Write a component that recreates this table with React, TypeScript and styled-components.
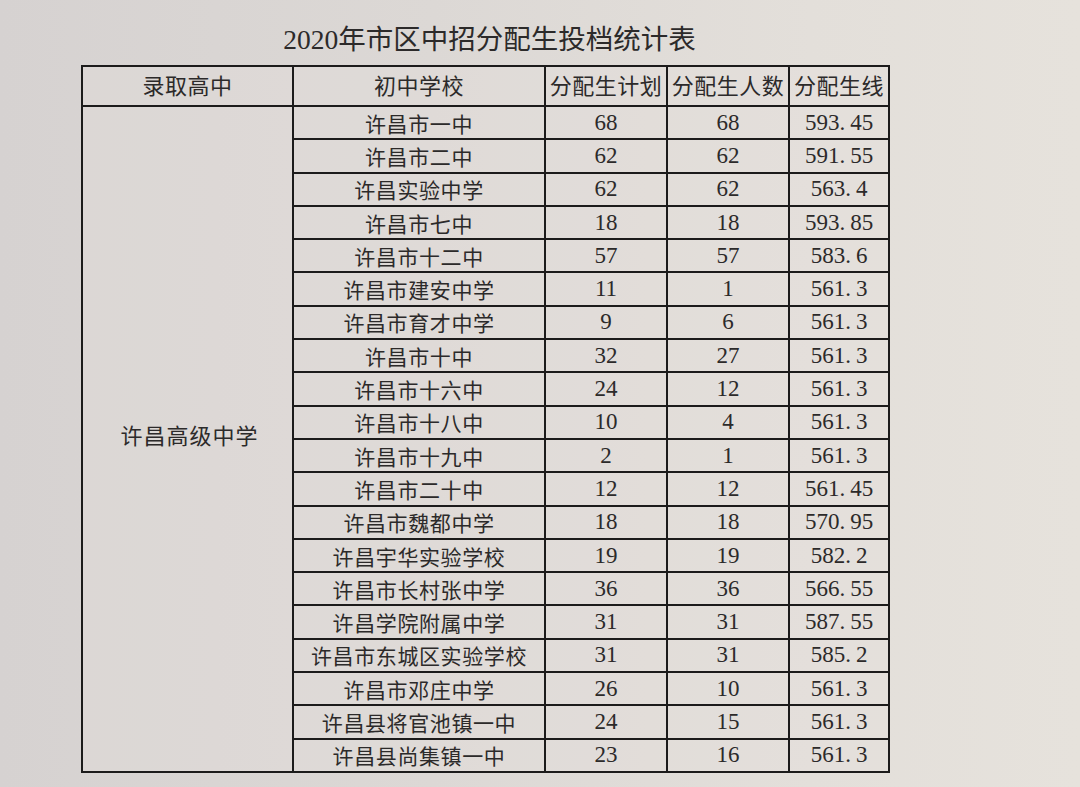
import styled, { createGlobalStyle } from "styled-components";

const GlobalStyle = createGlobalStyle`
  html, body {
    margin: 0;
    padding: 0;
  }
  body {
    width: 1080px;
    height: 787px;
    overflow: hidden;
    background: linear-gradient(90deg, #d6d2d1 0%, #dcd8d5 40%, #e3dfda 75%, #e6e2dc 100%);
  }
`;

const Page = styled.div`
  width: 1080px;
  height: 787px;
  padding: 23px 0 0 81px;
  box-sizing: border-box;
  color: #2c2a2a;
  font-family: "Liberation Serif", "Noto Sans CJK SC", serif;
`;

const Title = styled.h1`
  width: 808px;
  margin: 0 0 8px;
  text-align: center;
  font-size: 27.5px;
  font-weight: normal;
  line-height: 34px;
  padding-left: 9px;
  box-sizing: border-box;
`;

const Sheet = styled.table`
  width: 808px;
  border-collapse: collapse;
  table-layout: fixed;
  border: 2px solid #1c1b1b;
  background: rgba(228, 224, 220, 0.35);
`;

const HeadCell = styled.th<{ $w: number }>`
  width: ${(p) => p.$w}px;
  height: 34px;
  padding: 0 0 4px;
  border: 2px solid #1c1b1b;
  font-size: 22px;
  font-weight: normal;
  letter-spacing: 0.5px;
  white-space: nowrap;
  text-align: center;
  vertical-align: middle;
`;

const Cell = styled.td<{ $num?: boolean }>`
  height: 31.3px;
  padding: 0;
  border: 2px solid #1c1b1b;
  text-align: center;
  vertical-align: middle;
  white-space: nowrap;
  font-size: ${(p) => (p.$num ? "23px" : "21px")};
  letter-spacing: ${(p) => (p.$num ? "0" : "0.6px")};
`;

const HighSchool = styled.td`
  padding: 0 0 10px 4px;
  border: 2px solid #1c1b1b;
  text-align: center;
  vertical-align: middle;
  font-size: 22px;
  letter-spacing: 1px;
`;

const Dot = styled.span`
  margin-right: 5px;
`;

const columns: [string, number][] = [
  ["录取高中", 209],
  ["初中学校", 250],
  ["分配生计划", 120],
  ["分配生人数", 120],
  ["分配生线", 98],
];

const rows: [string, string, string, string][] = [
  ["许昌市一中", "68", "68", "593.45"],
  ["许昌市二中", "62", "62", "591.55"],
  ["许昌实验中学", "62", "62", "563.4"],
  ["许昌市七中", "18", "18", "593.85"],
  ["许昌市十二中", "57", "57", "583.6"],
  ["许昌市建安中学", "11", "1", "561.3"],
  ["许昌市育才中学", "9", "6", "561.3"],
  ["许昌市十中", "32", "27", "561.3"],
  ["许昌市十六中", "24", "12", "561.3"],
  ["许昌市十八中", "10", "4", "561.3"],
  ["许昌市十九中", "2", "1", "561.3"],
  ["许昌市二十中", "12", "12", "561.45"],
  ["许昌市魏都中学", "18", "18", "570.95"],
  ["许昌宇华实验学校", "19", "19", "582.2"],
  ["许昌市长村张中学", "36", "36", "566.55"],
  ["许昌学院附属中学", "31", "31", "587.55"],
  ["许昌市东城区实验学校", "31", "31", "585.2"],
  ["许昌市邓庄中学", "26", "10", "561.3"],
  ["许昌县将官池镇一中", "24", "15", "561.3"],
  ["许昌县尚集镇一中", "23", "16", "561.3"],
];

const Score = ({ value }: { value: string }) => {
  const [whole, frac] = value.split(".");
  return (
    <>
      {whole}
      <Dot>.</Dot>
      {frac}
    </>
  );
};

export default function App() {
  return (
    <Page>
      <GlobalStyle />
      <Title>2020年市区中招分配生投档统计表</Title>
      <Sheet>
        <thead>
          <tr>
            {columns.map(([label, w]) => (
              <HeadCell key={label} $w={w}>
                {label}
              </HeadCell>
            ))}
          </tr>
        </thead>
        <tbody>
          {rows.map(([school, plan, count, line], i) => (
            <tr key={school}>
              {i === 0 && <HighSchool rowSpan={rows.length}>许昌高级中学</HighSchool>}
              <Cell>{school}</Cell>
              <Cell $num>{plan}</Cell>
              <Cell $num>{count}</Cell>
              <Cell $num>
                <Score value={line} />
              </Cell>
            </tr>
          ))}
        </tbody>
      </Sheet>
    </Page>
  );
}
